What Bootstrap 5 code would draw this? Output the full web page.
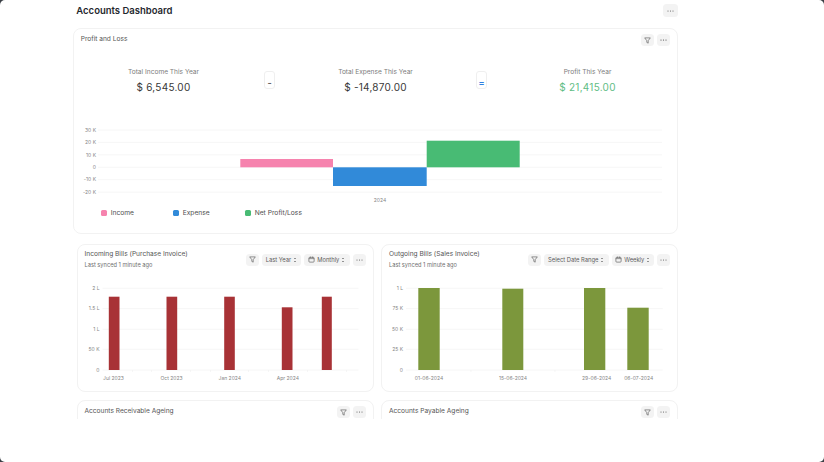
<!doctype html>
<html lang="en">
<head>
<meta charset="utf-8">
<title>Accounts Dashboard</title>
<link href="https://cdn.jsdelivr.net/npm/bootstrap@5.3.0/dist/css/bootstrap.min.css" rel="stylesheet">
<style>
html,body{height:100%;margin:0;background:#3a3f45;overflow:hidden}
body{font-family:Inter,"Liberation Sans",sans-serif;color:#383838}
.frame{height:462px;width:824px;background:#fff;border-radius:5px;overflow:hidden}
.clip{height:419px;overflow:hidden;padding:4px 146px 0 73px}
.page-head{height:13px;margin-bottom:11px;padding-left:3.3px}
.page-title{font-size:9.5px;font-weight:600;color:#1f272e;margin:0;line-height:13px}
.ib{height:12px;min-width:13px;border-radius:3.5px;background:#f3f3f3;color:#5c5c5c;font-size:5.8px;display:inline-flex;align-items:center;justify-content:center;gap:2px;padding:0 3px;line-height:1}
.ib svg{display:block}
.ib.w-dots{width:13px}
.ib.w-filter{width:13px}
.ib.s-last{width:39px}.ib.s-mon{width:45.5px}.ib.s-range{width:64.5px}.ib.s-week{width:42.5px}
.ib.head-dots{width:15px;height:13px}
.btn-gap{gap:2.7px}
.panel{border:1px solid #f2f2f2;border-radius:8px;background:#fff}
.pnl{height:206px;margin-bottom:10px}
.pnl-head{padding:5px 7px 0 6.7px;height:17px}
.ttl{font-size:6.6px;color:#555;line-height:10px;margin:0;font-weight:400}
.sub{font-size:5.7px;color:#707070;line-height:8px;margin:2px 0 0}
.stats{margin-top:22px;height:26px}
.stat{width:106px;text-align:center}
.stat-l{font-size:6.6px;color:#7c7c7c;line-height:9px;margin-bottom:3px}
.stat-v{font-size:10px;font-weight:400;color:#383838;line-height:14px;letter-spacing:.25px}
.stat-v.pos{color:#5fbd85}
.opw{width:106px}
.opb{width:11px;height:18px;border:1px solid #efefef;border-radius:3px;font-size:9px;font-weight:700;color:#666;display:flex;align-items:center;justify-content:center;margin-top:3px;padding-top:4px;line-height:1}
.opb.blue{color:#2f7fe0}
.chart{display:block;margin-top:30px}
.legend{margin:6px 0 0 26.7px}
.leg{width:72px;font-size:6.7px;color:#4f4f4f;line-height:6px;font-weight:400;gap:4px}
.sw{width:6px;height:6px;border-radius:1.5px;flex:none}
.c-pink{background:#f683ae}.c-blue{background:#318ad9}.c-green{background:#48bb74}
.pair{gap:7.5px;padding-left:3.5px;margin-bottom:8px}
.half{flex:1 1 0;min-width:0}
.tall{height:148px}
.halfh{padding:4px 7px 0 7px;height:30px}
.ctrls{gap:3px;padding-top:4.5px}
.short{height:30px}
.shorth{padding:5px 7px 0 7px}
.tx{font-family:Inter,"Liberation Sans",sans-serif;font-size:5px;fill:#858585}
</style>
</head>
<body>
<div class="frame">
<div class="clip">
  <div class="page-head d-flex justify-content-between align-items-center">
    <h1 class="page-title">Accounts Dashboard</h1>
    <span class="ib head-dots"><svg width="7" height="2" viewBox="0 0 7 2"><g fill="#5a5a5a"><circle cx="1" cy="1" r=".55"/><circle cx="3.5" cy="1" r=".55"/><circle cx="6" cy="1" r=".55"/></g></svg></span>
  </div>

  <div class="panel pnl">
    <div class="pnl-head d-flex justify-content-between">
      <p class="ttl">Profit and Loss</p>
      <div class="d-flex btn-gap">
        <span class="ib w-filter"><svg width="7" height="7" viewBox="0 0 8 8" fill="none" stroke="#525252" stroke-width=".7" stroke-linejoin="round"><path d="M.8 1h6.4L4.8 4.2V7L3.2 6.2v-2z"/></svg></span>
        <span class="ib w-dots"><svg width="7" height="2" viewBox="0 0 7 2"><g fill="#444"><circle cx="1" cy="1" r=".6"/><circle cx="3.5" cy="1" r=".6"/><circle cx="6" cy="1" r=".6"/></g></svg></span>
      </div>
    </div>
    <div class="stats d-flex justify-content-center">
      <div class="stat"><div class="stat-l">Total Income This Year</div><div class="stat-v">$ 6,545.00</div></div>
      <div class="opw d-flex justify-content-center"><div class="opb">-</div></div>
      <div class="stat"><div class="stat-l">Total Expense This Year</div><div class="stat-v">$ -14,870.00</div></div>
      <div class="opw d-flex justify-content-center"><div class="opb blue">=</div></div>
      <div class="stat"><div class="stat-l">Profit This Year</div><div class="stat-v pos">$ 21,415.00</div></div>
    </div>
    <svg class="chart" width="602" height="80" viewBox="74 124 602 80">
      <g stroke="#f4f4f4" stroke-width=".8"><path d="M98 130H662M98 142.4H662M98 154.8H662M98 167.3H662M98 179.7H662M98 192.2H662"/></g>
      <g class="tx" text-anchor="end"><text class="tx" x="96" y="131.7">30 K</text><text class="tx" x="96" y="144.1">20 K</text><text class="tx" x="96" y="156.5">10 K</text><text class="tx" x="96" y="169">0</text><text class="tx" x="96" y="181.4">-10 K</text><text class="tx" x="96" y="193.9">-20 K</text></g>
      <rect x="240.3" y="159" width="92.7" height="8.3" fill="#f683ae"/>
      <rect x="333" y="167.3" width="93.7" height="18.7" fill="#318ad9"/>
      <rect x="426.7" y="140.7" width="93" height="26.6" fill="#48bb74"/>
      <text class="tx" x="380" y="201.7" text-anchor="middle">2024</text>
    </svg>
    <div class="legend d-flex">
      <div class="leg d-flex align-items-center"><span class="sw c-pink"></span>Income</div>
      <div class="leg d-flex align-items-center"><span class="sw c-blue"></span>Expense</div>
      <div class="leg d-flex align-items-center"><span class="sw c-green"></span>Net Profit/Loss</div>
    </div>
  </div>

  <div class="pair d-flex">
    <div class="panel half tall">
      <div class="halfh d-flex justify-content-between">
        <div><p class="ttl">Incoming Bills (Purchase Invoice)</p><p class="sub">Last synced 1 minute ago</p></div>
        <div class="ctrls d-flex">
          <span class="ib w-filter"><svg width="7" height="7" viewBox="0 0 8 8" fill="none" stroke="#525252" stroke-width=".7" stroke-linejoin="round"><path d="M.8 1h6.4L4.8 4.2V7L3.2 6.2v-2z"/></svg></span>
          <span class="ib s-last">Last Year <svg width="4" height="6" viewBox="0 0 4 6" fill="none" stroke="#525252" stroke-width=".6"><path d="M1 2l1-1 1 1M1 4l1 1 1-1"/></svg></span>
          <span class="ib s-mon"><svg width="7" height="7" viewBox="0 0 8 8" fill="none" stroke="#525252" stroke-width=".7"><rect x="1" y="1.5" width="6" height="5.5" rx="1"/><path d="M1 3h6M2.8.7v1.3M5.2.7v1.3"/></svg>Monthly <svg width="4" height="6" viewBox="0 0 4 6" fill="none" stroke="#525252" stroke-width=".6"><path d="M1 2l1-1 1 1M1 4l1 1 1-1"/></svg></span>
          <span class="ib w-dots"><svg width="7" height="2" viewBox="0 0 7 2"><g fill="#5a5a5a"><circle cx="1" cy="1" r=".55"/><circle cx="3.5" cy="1" r=".55"/><circle cx="6" cy="1" r=".55"/></g></svg></span>
        </div>
      </div>
      <svg class="d-block" width="295" height="110" viewBox="77.5 275 295 110">
        <path stroke="#f4f4f4" stroke-width=".8" d="M102 288.3H358M102 308.6H358M102 329.3H358M102 349.3H358M102 370H358"/>
        <path stroke="#f0f0f0" stroke-width=".6" d="M132 370v2M151 370v2M190 370v2M210 370v2M248 370v2M268 370v2M307 370v2M346 370v2"/>
        <g fill="#a83236"><rect x="108.3" y="296.7" width="10.7" height="73.3"/><rect x="166" y="296.7" width="10.7" height="73.3"/><rect x="223.7" y="296.7" width="10.6" height="73.3"/><rect x="281.3" y="307.3" width="10.7" height="62.7"/><rect x="321.3" y="296.7" width="10" height="73.3"/></g>
        <text class="tx" x="99" y="290" text-anchor="end">2 L</text><text class="tx" x="99" y="310.3" text-anchor="end">1.5 L</text><text class="tx" x="99" y="331" text-anchor="end">1 L</text><text class="tx" x="99" y="351" text-anchor="end">50 K</text><text class="tx" x="99" y="371.7" text-anchor="end">0</text>
        <text class="tx" x="113" y="379.6" text-anchor="middle">Jul 2023</text><text class="tx" x="171" y="379.6" text-anchor="middle">Oct 2023</text><text class="tx" x="229.3" y="379.6" text-anchor="middle">Jan 2024</text><text class="tx" x="287.3" y="379.6" text-anchor="middle">Apr 2024</text>
      </svg>
    </div>
    <div class="panel half tall">
      <div class="halfh d-flex justify-content-between">
        <div><p class="ttl">Outgoing Bills (Sales Invoice)</p><p class="sub">Last synced 1 minute ago</p></div>
        <div class="ctrls d-flex">
          <span class="ib w-filter"><svg width="7" height="7" viewBox="0 0 8 8" fill="none" stroke="#525252" stroke-width=".7" stroke-linejoin="round"><path d="M.8 1h6.4L4.8 4.2V7L3.2 6.2v-2z"/></svg></span>
          <span class="ib s-range">Select Date Range <svg width="4" height="6" viewBox="0 0 4 6" fill="none" stroke="#525252" stroke-width=".6"><path d="M1 2l1-1 1 1M1 4l1 1 1-1"/></svg></span>
          <span class="ib s-week"><svg width="7" height="7" viewBox="0 0 8 8" fill="none" stroke="#525252" stroke-width=".7"><rect x="1" y="1.5" width="6" height="5.5" rx="1"/><path d="M1 3h6M2.8.7v1.3M5.2.7v1.3"/></svg>Weekly <svg width="4" height="6" viewBox="0 0 4 6" fill="none" stroke="#525252" stroke-width=".6"><path d="M1 2l1-1 1 1M1 4l1 1 1-1"/></svg></span>
          <span class="ib w-dots"><svg width="7" height="2" viewBox="0 0 7 2"><g fill="#5a5a5a"><circle cx="1" cy="1" r=".55"/><circle cx="3.5" cy="1" r=".55"/><circle cx="6" cy="1" r=".55"/></g></svg></span>
        </div>
      </div>
      <svg class="d-block" width="295" height="110" viewBox="382 275 295 110">
        <path stroke="#f4f4f4" stroke-width=".8" d="M406 288.3H662.7M406 308.6H662.7M406 329.3H662.7M406 349.3H662.7M406 370H662.7"/>
        <path stroke="#f0f0f0" stroke-width=".6" d="M471 370v2M555 370v2"/>
        <g fill="#7c973c"><rect x="418.3" y="288" width="21.4" height="82"/><rect x="502.3" y="288.7" width="21" height="81.3"/><rect x="584" y="288" width="21.3" height="82"/><rect x="627.3" y="307.7" width="21.4" height="62.3"/></g>
        <text class="tx" x="403" y="290" text-anchor="end">1 L</text><text class="tx" x="403" y="310.3" text-anchor="end">75 K</text><text class="tx" x="403" y="331" text-anchor="end">50 K</text><text class="tx" x="403" y="351" text-anchor="end">25 K</text><text class="tx" x="403" y="371.7" text-anchor="end">0</text>
        <text class="tx" x="429" y="379.6" text-anchor="middle">01-06-2024</text><text class="tx" x="513" y="379.6" text-anchor="middle">15-06-2024</text><text class="tx" x="596.7" y="379.6" text-anchor="middle">29-06-2024</text><text class="tx" x="638.7" y="379.6" text-anchor="middle">06-07-2024</text>
      </svg>
    </div>
  </div>

  <div class="pair d-flex">
    <div class="panel half short">
      <div class="shorth d-flex justify-content-between">
        <p class="ttl">Accounts Receivable Ageing</p>
        <div class="d-flex btn-gap">
          <span class="ib w-filter"><svg width="7" height="7" viewBox="0 0 8 8" fill="none" stroke="#525252" stroke-width=".7" stroke-linejoin="round"><path d="M.8 1h6.4L4.8 4.2V7L3.2 6.2v-2z"/></svg></span>
          <span class="ib w-dots"><svg width="7" height="2" viewBox="0 0 7 2"><g fill="#5a5a5a"><circle cx="1" cy="1" r=".55"/><circle cx="3.5" cy="1" r=".55"/><circle cx="6" cy="1" r=".55"/></g></svg></span>
        </div>
      </div>
    </div>
    <div class="panel half short">
      <div class="shorth d-flex justify-content-between">
        <p class="ttl">Accounts Payable Ageing</p>
        <div class="d-flex btn-gap">
          <span class="ib w-filter"><svg width="7" height="7" viewBox="0 0 8 8" fill="none" stroke="#525252" stroke-width=".7" stroke-linejoin="round"><path d="M.8 1h6.4L4.8 4.2V7L3.2 6.2v-2z"/></svg></span>
          <span class="ib w-dots"><svg width="7" height="2" viewBox="0 0 7 2"><g fill="#5a5a5a"><circle cx="1" cy="1" r=".55"/><circle cx="3.5" cy="1" r=".55"/><circle cx="6" cy="1" r=".55"/></g></svg></span>
        </div>
      </div>
    </div>
  </div>
</div>
</div>
<script src="https://cdn.jsdelivr.net/npm/bootstrap@5.3.0/dist/js/bootstrap.bundle.min.js"></script>
</body>
</html>
